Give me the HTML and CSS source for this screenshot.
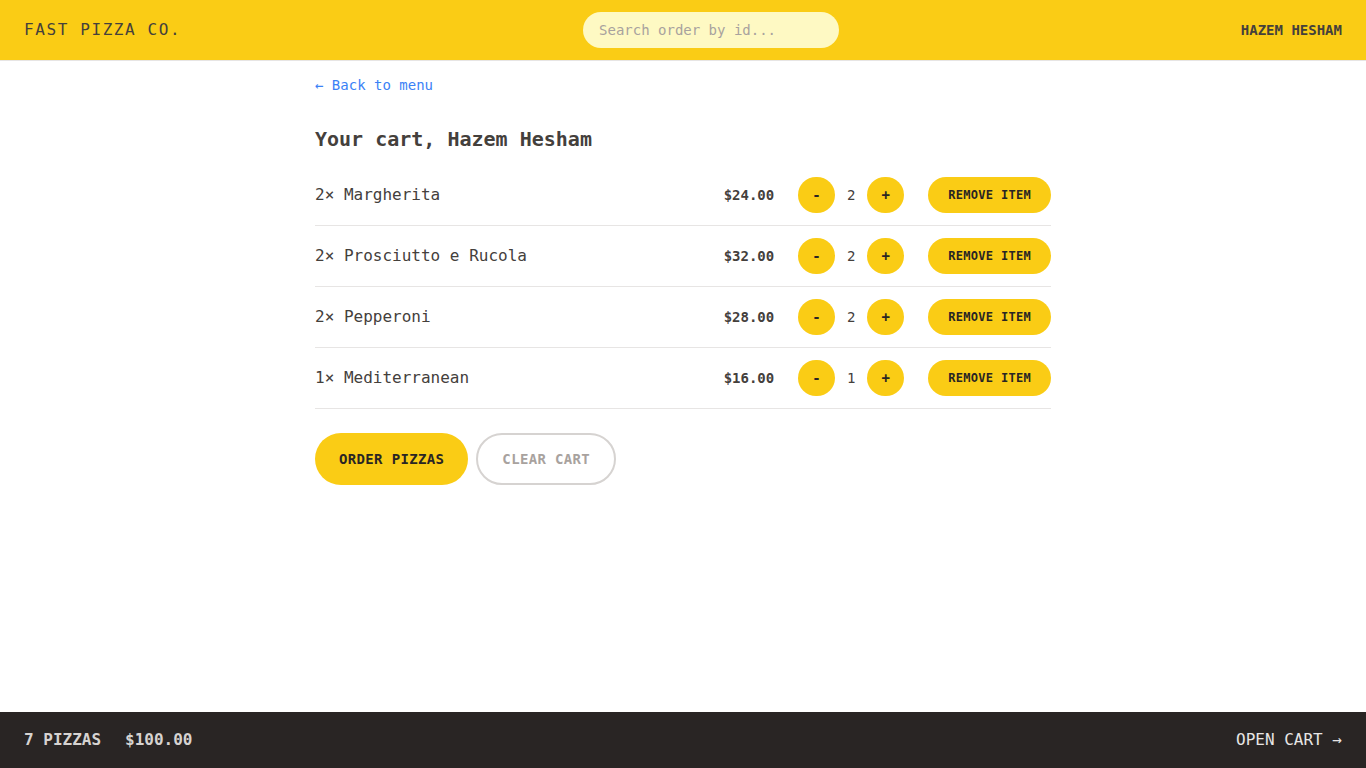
FILE: index.html
```html
<!DOCTYPE html>
<html lang="en">
<head>
<meta charset="utf-8">
<title>Fast React Pizza Co.</title>
<link rel="stylesheet" href="styles.css">
</head>
<body>
<div class="app">
  <header class="header">
    <a class="logo" href="#">Fast Pizza Co.</a>
    <form class="search"><input class="search-input" placeholder="Search order by id..."></form>
    <div class="username">Hazem Hesham</div>
  </header>
  <div class="content">
    <main class="main">
      <div class="cart">
        <a class="link" href="#">&larr; Back to menu</a>
        <h2 class="cart-title">Your cart, Hazem Hesham</h2>
        <ul class="cart-list">
          <li class="cart-item">
            <p class="item-name">2&times; Margherita</p>
            <div class="item-actions">
              <p class="item-price">$24.00</p>
              <div class="qty">
                <button class="btn btn-round">-</button>
                <span class="qty-num">2</span>
                <button class="btn btn-round">+</button>
              </div>
              <button class="btn btn-small">Remove item</button>
            </div>
          </li>
          <li class="cart-item">
            <p class="item-name">2&times; Prosciutto e Rucola</p>
            <div class="item-actions">
              <p class="item-price">$32.00</p>
              <div class="qty">
                <button class="btn btn-round">-</button>
                <span class="qty-num">2</span>
                <button class="btn btn-round">+</button>
              </div>
              <button class="btn btn-small">Remove item</button>
            </div>
          </li>
          <li class="cart-item">
            <p class="item-name">2&times; Pepperoni</p>
            <div class="item-actions">
              <p class="item-price">$28.00</p>
              <div class="qty">
                <button class="btn btn-round">-</button>
                <span class="qty-num">2</span>
                <button class="btn btn-round">+</button>
              </div>
              <button class="btn btn-small">Remove item</button>
            </div>
          </li>
          <li class="cart-item">
            <p class="item-name">1&times; Mediterranean</p>
            <div class="item-actions">
              <p class="item-price">$16.00</p>
              <div class="qty">
                <button class="btn btn-round">-</button>
                <span class="qty-num">1</span>
                <button class="btn btn-round">+</button>
              </div>
              <button class="btn btn-small">Remove item</button>
            </div>
          </li>
        </ul>
        <div class="cart-buttons">
          <a class="btn btn-primary" href="#">Order pizzas</a>
          <button class="btn-secondary">Clear cart</button>
        </div>
      </div>
    </main>
  </div>
  <footer class="footer">
    <p class="overview">
      <span>7 pizzas</span>
      <span>$100.00</span>
    </p>
    <a class="open-cart" href="#">Open cart &rarr;</a>
  </footer>
</div>
</body>
</html>
```
FILE: styles.css
```css
* { box-sizing: border-box; }
html, body { margin: 0; padding: 0; }
body {
  font-family: "DejaVu Sans Mono", "Liberation Mono", monospace;
  font-size: 16px;
  line-height: 24px;
  color: #44403c;
  background: #fff;
}
p, h2, ul { margin: 0; padding: 0; }
a { text-decoration: none; color: inherit; }
button { font-family: inherit; border: 0; cursor: pointer; margin: 0; }

.app {
  display: grid;
  grid-template-rows: auto 1fr auto;
  height: 100vh;
}

.header {
  display: flex;
  align-items: center;
  justify-content: space-between;
  background: #facc15;
  padding: 12px 24px;
  border-bottom: 1px solid #e7e5e4;
  text-transform: uppercase;
}
.logo {
  letter-spacing: 0.1em;
  font-size: 16px;
}
.search { margin: 0; }
.search-input {
  width: 256px;
  height: 36px;
  border: 0;
  outline: none;
  border-radius: 9999px;
  background: #fef9c3;
  padding: 8px 16px;
  font-family: inherit;
  font-size: 14px;
  line-height: 20px;
  color: #44403c;
}
.search-input::placeholder { color: #a8a29e; }
.username {
  font-size: 14px;
  line-height: 20px;
  font-weight: 600;
}

.content { overflow: hidden; }
.main {
  max-width: 768px;
  margin: 0 auto;
}
.cart { padding: 12px 16px; }
.link {
  font-size: 14px;
  color: #3b82f6;
}
.cart-title {
  margin-top: 28px;
  font-size: 20px;
  line-height: 28px;
  font-weight: 600;
}
.cart-list {
  list-style: none;
  margin-top: 12px;
  border-bottom: 1px solid #e7e5e4;
}
.cart-item {
  display: flex;
  align-items: center;
  justify-content: space-between;
  padding: 12px 0;
}
.cart-item + .cart-item { border-top: 1px solid #e7e5e4; }
.item-actions {
  display: flex;
  align-items: center;
  gap: 24px;
}
.item-price {
  font-size: 14px;
  line-height: 20px;
  font-weight: 700;
}
.qty {
  display: flex;
  align-items: center;
  gap: 12px;
}
.qty-num {
  font-size: 14px;
  line-height: 20px;
  font-weight: 500;
}

.btn {
  display: inline-block;
  font-size: 14px;
  line-height: 20px;
  border-radius: 9999px;
  background: #facc15;
  font-weight: 600;
  text-transform: uppercase;
  letter-spacing: 0.025em;
  color: #292524;
}
.btn-round {
  padding: 8px 14px;
}
.btn-small {
  padding: 10px 20px;
  font-size: 12px;
  line-height: 16px;
}
.btn-primary {
  padding: 16px 24px;
}
.cart-buttons {
  margin-top: 24px;
  display: flex;
  gap: 8px;
}
.btn-secondary {
  display: inline-block;
  font-size: 14px;
  line-height: 20px;
  border-radius: 9999px;
  border: 2px solid #d6d3d1;
  background: transparent;
  font-weight: 600;
  text-transform: uppercase;
  letter-spacing: 0.025em;
  color: #a8a29e;
  padding: 14px 24px;
}

.footer {
  display: flex;
  align-items: center;
  justify-content: space-between;
  background: #292524;
  color: #e7e5e4;
  padding: 16px 24px;
  text-transform: uppercase;
  font-size: 16px;
  line-height: 24px;
}
.overview {
  display: flex;
  gap: 24px;
  font-weight: 600;
  color: #d6d3d1;
}
```
